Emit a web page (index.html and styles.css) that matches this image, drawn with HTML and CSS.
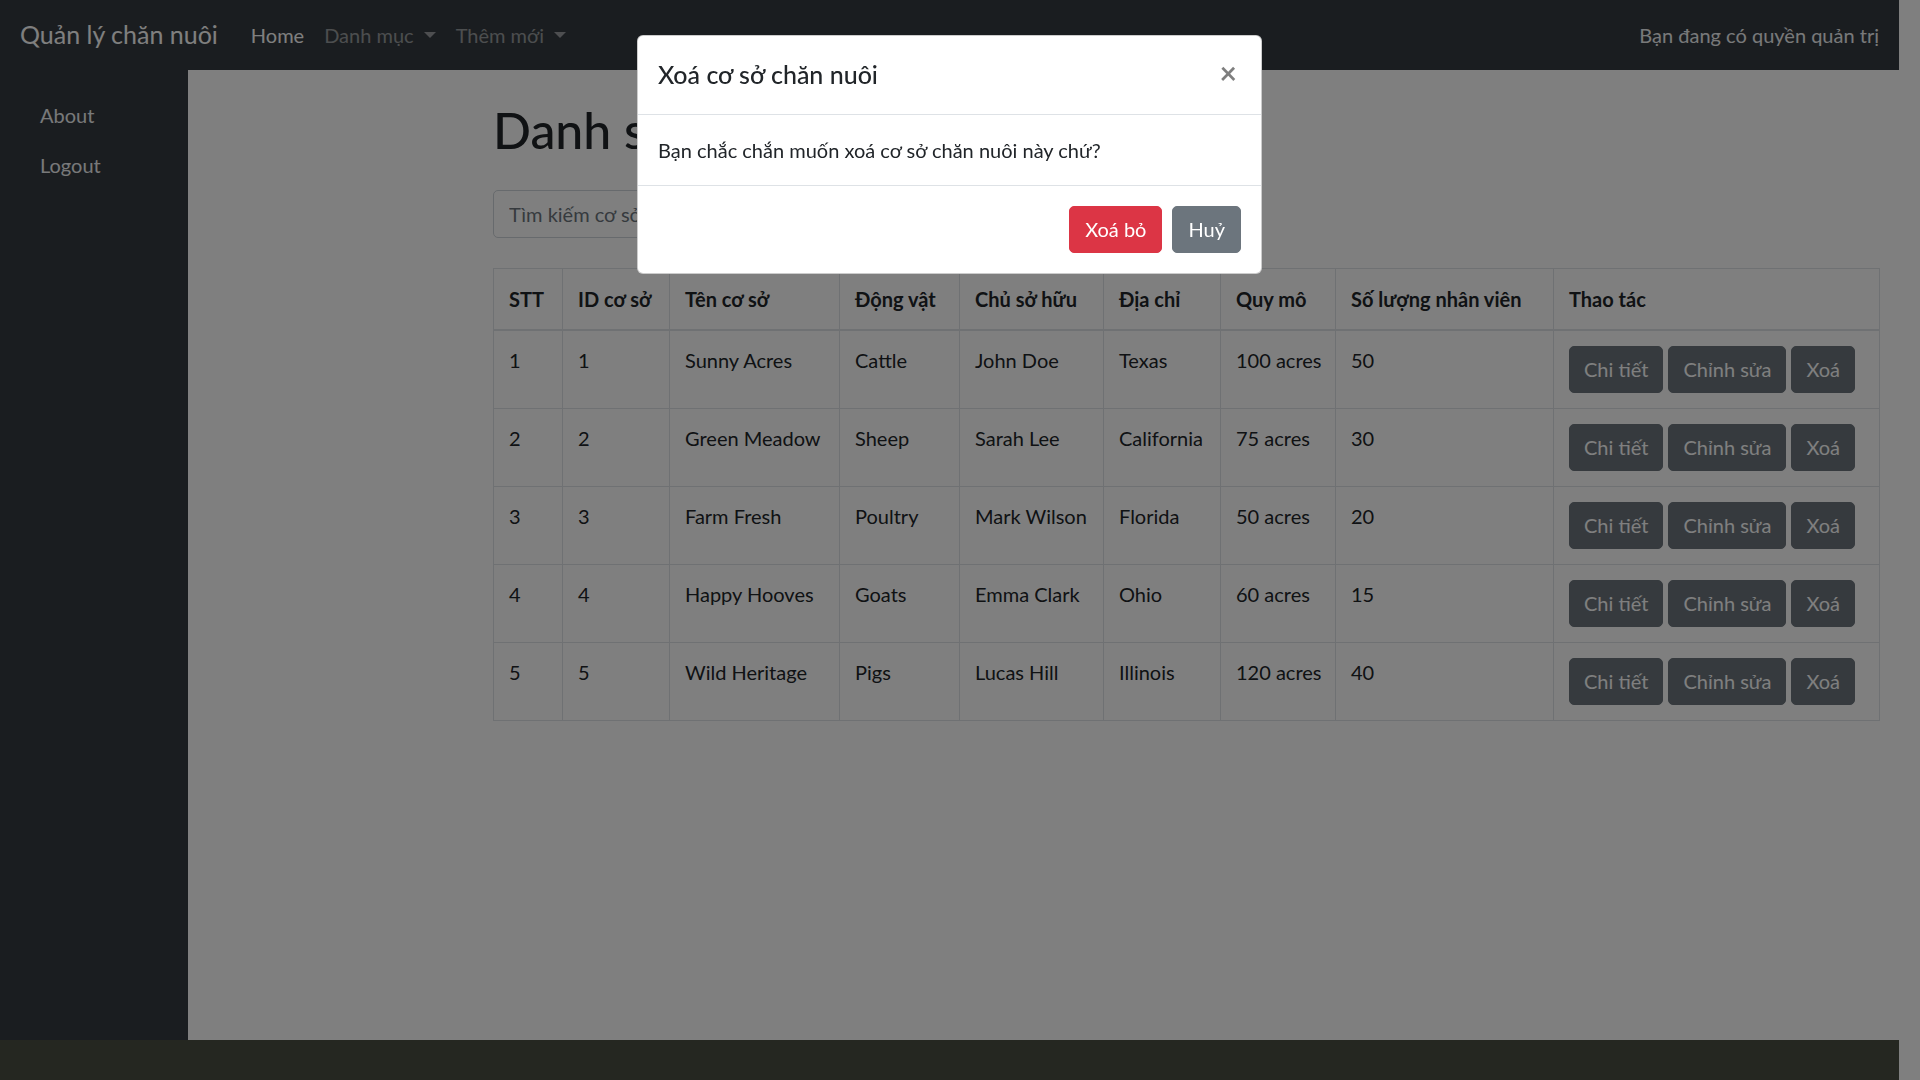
FILE: index.html
```html
<!DOCTYPE html>
<html lang="vi">
<head>
<meta charset="utf-8">
<title>Quản lý chăn nuôi</title>
<link rel="stylesheet" href="styles.css">
</head>
<body>
<nav class="navbar">
  <a class="brand" href="#">Quản lý chăn nuôi</a>
  <ul class="nav-menu">
    <li><a class="nav-link active" href="#">Home</a></li>
    <li><a class="nav-link dropdown" href="#">Danh mục</a></li>
    <li><a class="nav-link dropdown" href="#">Thêm mới</a></li>
  </ul>
  <span class="navbar-text">Bạn đang có quyền quản trị</span>
</nav>
<div class="layout">
  <aside class="sidebar">
    <a class="side-link" href="#">About</a>
    <a class="side-link" href="#">Logout</a>
  </aside>
  <main class="main">
    <div class="container">
      <h1 class="page-title">Danh sách cơ sở chăn nuôi</h1>
      <form class="search-form">
        <input class="search-input" type="text" placeholder="Tìm kiếm cơ sở chăn nuôi...">
      </form>
      <table class="data-table">
        <colgroup>
          <col class="c-stt"><col class="c-id"><col class="c-name"><col class="c-animal"><col class="c-owner"><col class="c-addr"><col class="c-scale"><col class="c-staff"><col class="c-act">
        </colgroup>
        <thead>
          <tr><th>STT</th><th>ID cơ sở</th><th>Tên cơ sở</th><th>Động vật</th><th>Chủ sở hữu</th><th>Địa chỉ</th><th>Quy mô</th><th>Số lượng nhân viên</th><th>Thao tác</th></tr>
        </thead>
        <tbody>
          <tr><td>1</td><td>1</td><td>Sunny Acres</td><td>Cattle</td><td>John Doe</td><td>Texas</td><td>100 acres</td><td>50</td><td><div class="actions"><a class="btn btn-secondary" href="#">Chi tiết</a><a class="btn btn-secondary" href="#">Chỉnh sửa</a><a class="btn btn-secondary" href="#">Xoá</a></div></td></tr>
          <tr><td>2</td><td>2</td><td>Green Meadow</td><td>Sheep</td><td>Sarah Lee</td><td>California</td><td>75 acres</td><td>30</td><td><div class="actions"><a class="btn btn-secondary" href="#">Chi tiết</a><a class="btn btn-secondary" href="#">Chỉnh sửa</a><a class="btn btn-secondary" href="#">Xoá</a></div></td></tr>
          <tr><td>3</td><td>3</td><td>Farm Fresh</td><td>Poultry</td><td>Mark Wilson</td><td>Florida</td><td>50 acres</td><td>20</td><td><div class="actions"><a class="btn btn-secondary" href="#">Chi tiết</a><a class="btn btn-secondary" href="#">Chỉnh sửa</a><a class="btn btn-secondary" href="#">Xoá</a></div></td></tr>
          <tr><td>4</td><td>4</td><td>Happy Hooves</td><td>Goats</td><td>Emma Clark</td><td>Ohio</td><td>60 acres</td><td>15</td><td><div class="actions"><a class="btn btn-secondary" href="#">Chi tiết</a><a class="btn btn-secondary" href="#">Chỉnh sửa</a><a class="btn btn-secondary" href="#">Xoá</a></div></td></tr>
          <tr><td>5</td><td>5</td><td>Wild Heritage</td><td>Pigs</td><td>Lucas Hill</td><td>Illinois</td><td>120 acres</td><td>40</td><td><div class="actions"><a class="btn btn-secondary" href="#">Chi tiết</a><a class="btn btn-secondary" href="#">Chỉnh sửa</a><a class="btn btn-secondary" href="#">Xoá</a></div></td></tr>
        </tbody>
      </table>
    </div>
  </main>
</div>
<footer class="footer"></footer>

<div class="backdrop"></div>
<div class="modal">
  <div class="modal-dialog">
    <div class="modal-header">
      <h5 class="modal-title">Xoá cơ sở chăn nuôi</h5>
      <button class="close" type="button">×</button>
    </div>
    <div class="modal-body">Bạn chắc chắn muốn xoá cơ sở chăn nuôi này chứ?</div>
    <div class="modal-footer">
      <button class="btn btn-danger" type="button">Xoá bỏ</button>
      <button class="btn btn-gray" type="button">Huỷ</button>
    </div>
  </div>
</div>
</body>
</html>
```
FILE: styles.css
```css
* { box-sizing: border-box; }
html, body { height: 100%; }
body {
  margin: 0;
  padding-right: 21px;
  font-family: Lato, "Noto Sans", sans-serif;
  font-size: 20px;
  line-height: 1.5;
  color: #212529;
  background: #fff;
  overflow: hidden;
}
a { text-decoration: none; }

/* navbar */
.navbar {
  height: 70px;
  background: #343a40;
  display: flex;
  align-items: center;
  padding: 0 20px;
}
.brand {
  color: #fff;
  font-size: 25px;
  line-height: 37.5px;
  margin-right: 23px;
}
.nav-menu {
  display: flex;
  list-style: none;
  margin: 0;
  padding: 0;
}
.nav-link {
  display: block;
  padding: 10px;
  color: rgba(255,255,255,.5);
}
.nav-link.active { color: #fff; }
.nav-link.dropdown::after {
  content: "";
  display: inline-block;
  margin-left: 10px;
  vertical-align: .255em;
  border-top: .3em solid;
  border-right: .3em solid transparent;
  border-left: .3em solid transparent;
}
.navbar-text {
  margin-left: auto;
  color: #f0f2f4;
}

/* layout */
.layout {
  display: flex;
  height: calc(100% - 110px);
}
.sidebar {
  width: 188px;
  flex: none;
  background: #343a40;
  padding: 20px 0;
  display: flex;
  flex-direction: column;
}
.side-link {
  display: block;
  padding: 10px 40px;
  color: #f0f2f4;
}
.main { flex: 1; min-width: 0; }
.container {
  max-width: 1425px;
  margin-left: auto;
  padding: 30px 19px 0;
}
.page-title {
  margin: 0 0 30px;
  font-size: 50px;
  font-weight: 500;
  line-height: 1.2;
}
.search-form { margin: 0 0 30px; }
.search-input {
  display: block;
  width: 700px;
  height: 47.5px;
  padding: 7.5px 15px;
  font: inherit;
  color: #495057;
  border: 1.25px solid #ced4da;
  border-radius: 5px;
  background: #fff;
}
.search-input::placeholder { color: #6c757d; }

/* table */
.data-table {
  width: 100%;
  border-collapse: collapse;
  table-layout: fixed;
}
.c-stt { width: 69px; }
.c-id { width: 107px; }
.c-name { width: 170px; }
.c-animal { width: 120px; }
.c-owner { width: 144px; }
.c-addr { width: 117px; }
.c-scale { width: 115px; }
.c-staff { width: 218px; }
.data-table th,
.data-table td {
  padding: 15px;
  border: 1.25px solid #dee2e6;
  text-align: left;
  vertical-align: top;
  white-space: nowrap;
}
.data-table th {
  font-weight: 700;
  vertical-align: bottom;
  border-bottom-width: 2.5px;
}
.data-table td { line-height: 29px; }
.actions { display: flex; gap: 5px; }
.actions .btn { padding: 7.5px 14px; }

/* buttons */
.btn {
  display: inline-block;
  padding: 7.5px 15px;
  font: inherit;
  line-height: 30px;
  border: 1.25px solid transparent;
  border-radius: 5px;
  color: #fff;
  cursor: pointer;
}
.btn-secondary { background: #6c757d; border-color: #6c757d; }
.btn-gray { background: #6c757d; border-color: #6c757d; }
.btn-danger { background: #dc3545; border-color: #dc3545; }

/* footer */
.footer {
  height: 40px;
  background: #4a4e42;
}

/* modal */
.backdrop {
  position: fixed;
  inset: 0;
  background: rgba(0,0,0,.5);
}
.modal {
  position: fixed;
  inset: 0;
  padding-right: 21px;
  display: flex;
  justify-content: center;
  align-items: flex-start;
}
.modal-dialog {
  width: 625px;
  margin-top: 35px;
  background: #fff;
  border: 1.25px solid rgba(0,0,0,.2);
  border-radius: 6px;
  display: flex;
  flex-direction: column;
}
.modal-header {
  display: flex;
  align-items: flex-start;
  padding: 20px;
  border-bottom: 1.25px solid #dee2e6;
}
.modal-title {
  margin: 0;
  font-size: 25px;
  font-weight: 500;
  line-height: 1.5;
}
.close {
  margin: -19px -16px -20px auto;
  padding: 20px;
  background: transparent;
  border: 0;
  font-family: inherit;
  font-size: 30px;
  font-weight: 700;
  line-height: 1;
  color: #000;
  opacity: .5;
  cursor: pointer;
}
.modal-body { padding: 20px; }
.modal-footer {
  display: flex;
  justify-content: flex-end;
  align-items: center;
  gap: 10px;
  padding: 20px;
  border-top: 1.25px solid #dee2e6;
}
```
